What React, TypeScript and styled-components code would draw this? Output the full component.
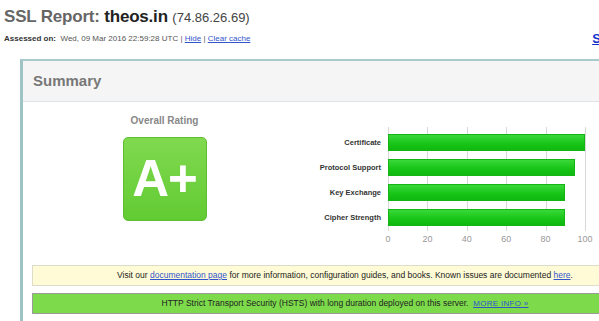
import React from 'react';
import styled, { createGlobalStyle } from 'styled-components';

interface IScore {
  label: string;
  value: number;
}

const scores: IScore[] = [
  { label: 'Certificate', value: 100 },
  { label: 'Protocol Support', value: 95 },
  { label: 'Key Exchange', value: 90 },
  { label: 'Cipher Strength', value: 90 },
];

const ticks = [0, 20, 40, 60, 80, 100];

export default function App() {
  return (
    <>
      <GlobalStyle />
      <Page>
        <ReportHeader>
          <Title>
            SSL Report: <Host>theos.in</Host> <Ip>(74.86.26.69)</Ip>
          </Title>
          <MetaRow>
            <Assessed>
              <b>Assessed on:</b>&nbsp; Wed, 09 Mar 2016 22:59:28 UTC | <a href="#">Hide</a> |{' '}
              <a href="#">Clear cache</a>
            </Assessed>
            <ScanLink href="#">Scan Another &raquo;</ScanLink>
          </MetaRow>
        </ReportHeader>

        <Card>
          <CardHeader>Summary</CardHeader>
          <CardBody>
            <RatingRow>
              <RatingCol>
                <RatingTitle>Overall Rating</RatingTitle>
                <Grade>A+</Grade>
              </RatingCol>
              <Chart>
                <Labels>
                  {scores.map((s) => (
                    <Label key={s.label}>{s.label}</Label>
                  ))}
                </Labels>
                <PlotCol>
                  <Plot>
                    {ticks.map((t) => (
                      <GridLine key={t} style={{ left: `${t}%` }} />
                    ))}
                    {scores.map((s) => (
                      <BarRow key={s.label}>
                        <Bar style={{ width: `${s.value}%` }} />
                      </BarRow>
                    ))}
                  </Plot>
                  <Axis>
                    {ticks.map((t) => (
                      <Tick key={t} style={{ left: `${t}%` }}>
                        {t}
                      </Tick>
                    ))}
                  </Axis>
                </PlotCol>
              </Chart>
            </RatingRow>

            <Notice $tone="info">
              Visit our <a href="#">documentation page</a> for more information, configuration guides, and
              books. Known issues are documented <a href="#">here</a>.
            </Notice>
            <Notice $tone="good">
              HTTP Strict Transport Security (HSTS) with long duration deployed on this server.&nbsp;{' '}
              <MoreInfo href="#">MORE INFO &raquo;</MoreInfo>
            </Notice>
          </CardBody>
        </Card>
      </Page>
    </>
  );
}

const GlobalStyle = createGlobalStyle`
  html, body {
    margin: 0;
    padding: 0;
    background: #fff;
    overflow: hidden;
  }
  body {
    font-family: 'Liberation Sans', Arial, sans-serif;
    color: #333;
  }
  a {
    color: #1a3cc8;
  }
`;

const Page = styled.div`
  width: 700px;
  padding: 0 0 0 4px;
`;

const ReportHeader = styled.div`
  padding-top: 7px;
`;

const Title = styled.h1`
  margin: 0;
  font-size: 17px;
  font-weight: bold;
  color: #666;
  line-height: 20px;
  letter-spacing: -0.2px;
`;

const Host = styled.span`
  color: #222;
`;

const Ip = styled.span`
  font-size: 13px;
  font-weight: normal;
  color: #444;
  letter-spacing: 0;
`;

const MetaRow = styled.div`
  display: flex;
  align-items: center;
  justify-content: space-between;
  margin-top: 1px;
  width: 683px;
  height: 18px;
`;

const Assessed = styled.div`
  font-size: 8px;
  color: #555;
  b {
    color: #333;
  }
  a {
    color: #3355cc;
  }
`;

const ScanLink = styled.a`
  font-size: 13px;
  font-weight: bold;
  color: #1133cc;
`;

const Card = styled.div`
  margin: 12px 0 0 16px;
  width: 660px;
  border-top: 2px solid #a9cbcb;
  border-left: 3px solid #9fc3c4;
  background: #fff;
`;

const CardHeader = styled.div`
  height: 40px;
  line-height: 40px;
  padding-left: 10px;
  background: #f5f5f5;
  border-bottom: 1px solid #dde3e6;
  font-size: 15px;
  font-weight: bold;
  color: #777;
`;

const CardBody = styled.div`
  padding: 13px 0 20px 9px;
`;

const RatingRow = styled.div`
  display: flex;
  align-items: flex-start;
`;

const RatingCol = styled.div`
  width: 265px;
  display: flex;
  flex-direction: column;
  align-items: center;
`;

const RatingTitle = styled.div`
  font-size: 10px;
  font-weight: bold;
  color: #888;
  line-height: 12px;
`;

const Grade = styled.div`
  margin-top: 10px;
  width: 82px;
  height: 82px;
  border: 1px solid #5ebd31;
  border-radius: 5px;
  background: linear-gradient(#80d94f, #62cb33);
  color: #fff;
  font-size: 51px;
  font-weight: bold;
  line-height: 82px;
  text-align: center;
  letter-spacing: -1px;
`;

const Chart = styled.div`
  display: flex;
  margin-top: 12px;
`;

const Labels = styled.div`
  width: 84px;
  padding: 7px 7px 0 0;
  display: flex;
  flex-direction: column;
  align-items: flex-end;
  gap: 8px;
`;

const Label = styled.div`
  height: 17px;
  line-height: 17px;
  font-size: 7.5px;
  font-weight: bold;
  color: #333;
  white-space: nowrap;
`;

const PlotCol = styled.div`
  width: 197px;
`;

const Plot = styled.div`
  position: relative;
  height: 104px;
  padding-top: 7px;
  box-sizing: border-box;
  display: flex;
  flex-direction: column;
  gap: 8px;
`;

const GridLine = styled.div`
  position: absolute;
  top: 0;
  bottom: 0;
  width: 1px;
  background: #d8d8d8;
`;

const BarRow = styled.div`
  position: relative;
  height: 17px;
`;

const Bar = styled.div`
  height: 100%;
  box-sizing: border-box;
  border: 1px solid #16b516;
  background: linear-gradient(#3ad83a, #16c416 60%, #10b810);
`;

const Axis = styled.div`
  position: relative;
  height: 14px;
`;

const Tick = styled.span`
  position: absolute;
  top: 3px;
  transform: translateX(-50%);
  font-size: 9px;
  color: #999;
`;

const Notice = styled.div<{ $tone: 'info' | 'good' }>`
  margin-top: ${(p) => (p.$tone === 'info' ? '20px' : '7px')};
  width: 626px;
  box-sizing: border-box;
  height: 21px;
  line-height: 19px;
  text-align: center;
  font-size: 8.5px;
  color: #222;
  border: 1px solid ${(p) => (p.$tone === 'info' ? '#dcdcc8' : '#9a9a9a')};
  background: ${(p) => (p.$tone === 'info' ? '#fffbd6' : '#7ddb4b')};
  a {
    color: #3355cc;
  }
`;

const MoreInfo = styled.a`
  font-size: 8px;
  letter-spacing: 0.3px;
`;
